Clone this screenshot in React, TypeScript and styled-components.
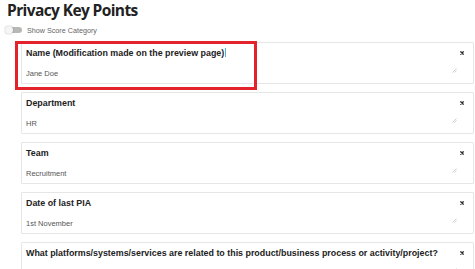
import React from "react";
import styled, { createGlobalStyle } from "styled-components";

const Global = createGlobalStyle`
  html, body { margin: 0; padding: 0; background: #ffffff; }
  body { font-family: "Liberation Sans", Arial, sans-serif; }
`;

const Page = styled.div`
  position: relative;
  width: 475px;
  height: 269px;
  overflow: hidden;
  padding: 0 1px 0 6px;
  box-sizing: border-box;
`;

const Title = styled.h1`
  margin: 0;
  padding-left: 1px;
  font-family: "Open Sans", sans-serif;
  font-weight: 700;
  font-size: 15.5px;
  line-height: 21px;
  color: #222222;
  letter-spacing: -0.6px;
`;

const ToggleRow = styled.div`
  display: flex;
  align-items: center;
  gap: 5px;
  margin-top: 5px;
  height: 8px;
`;

const Track = styled.div`
  position: relative;
  width: 16px;
  height: 6px;
  border-radius: 3px;
  background: #b8b8b8;
`;

const Knob = styled.div`
  position: absolute;
  left: -1px;
  top: -1px;
  width: 8px;
  height: 8px;
  border-radius: 50%;
  background: #f5f5f5;
  box-shadow: 0 0 1.5px rgba(0, 0, 0, 0.35);
`;

const ToggleLabel = styled.span`
  font-size: 7.2px;
  color: #666666;
  white-space: nowrap;
`;

const List = styled.div`
  display: flex;
  flex-direction: column;
  gap: 8px;
  margin: 8px 0 0 15px;
`;

const Card = styled.div`
  position: relative;
  height: 42px;
  box-sizing: border-box;
  border: 1px solid #e6e6e6;
  border-radius: 1px;
  background: #ffffff;
  padding: 4px 9px 0 4px;
  display: grid;
  grid-template-columns: 1fr auto;
  grid-template-rows: 12px 10px;
  row-gap: 9px;
  align-items: center;
`;

const Label = styled.div`
  font-weight: 700;
  font-size: 8.9px;
  color: #222222;
  white-space: nowrap;
`;

const Caret = styled.span`
  display: inline-block;
  width: 1px;
  height: 9px;
  margin-left: 1px;
  vertical-align: -1px;
  background: #4fb3d9;
`;

const Close = styled.svg`
  width: 4px;
  height: 4px;
  display: block;
`;

const Value = styled.div`
  font-size: 7.5px;
  color: #555555;
  grid-column: 1 / -1;
`;

const Grip = styled.svg`
  position: absolute;
  right: 16px;
  top: 25px;
  width: 5px;
  height: 5px;
`;

const Highlight = styled.div`
  position: absolute;
  left: 15px;
  top: 41px;
  width: 242px;
  height: 49px;
  box-sizing: border-box;
  border: 3px solid #e3222b;
  pointer-events: none;
`;

const fields = [
  { label: "Name (Modification made on the preview page)", value: "Jane Doe", editing: true },
  { label: "Department", value: "HR" },
  { label: "Team", value: "Recruitment" },
  { label: "Date of last PIA", value: "1st November" },
  {
    label:
      "What platforms/systems/services are related to this product/business process or activity/project?",
    value: "",
  },
];

export default function App() {
  return (
    <>
      <Global />
      <Page>
        <Title>Privacy Key Points</Title>
        <ToggleRow>
          <Track>
            <Knob />
          </Track>
          <ToggleLabel>Show Score Category</ToggleLabel>
        </ToggleRow>
        <List>
          {fields.map((f) => (
            <Card key={f.label}>
              <Label>
                {f.label}
                {f.editing && <Caret />}
              </Label>
              <Close viewBox="0 0 4 4">
                <path d="M0.4 0.4 L3.6 3.6 M3.6 0.4 L0.4 3.6" stroke="#2a2a2a" strokeWidth="1.3" />
              </Close>
              <Value>{f.value}</Value>
              <Grip viewBox="0 0 5 5">
                <path d="M4.5 0.5 L0.5 4.5 M4.5 2.5 L2.5 4.5" stroke="#c4c4c4" strokeWidth="0.8" />
              </Grip>
            </Card>
          ))}
        </List>
        <Highlight />
      </Page>
    </>
  );
}
